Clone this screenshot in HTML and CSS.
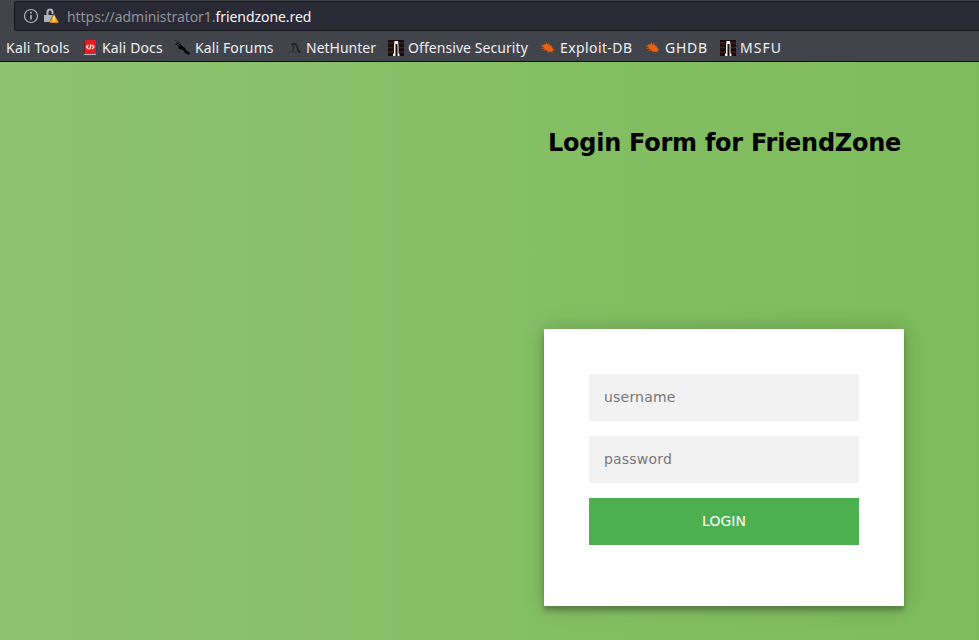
FILE: index.html
```
<!DOCTYPE html>
<html lang="en">
<head>
<meta charset="utf-8">
<title>Login</title>
<link rel="stylesheet" href="styles.css">
</head>
<body>
<svg class="defs" width="0" height="0">
  <symbol id="bug" viewBox="0 0 16 16"><path d="M2.500 5 6 4l3 .5L12 7l1.500 2.500-1.500 2.500L8 11.500 4.500 9z" fill="#ed6210"/><path d="M1 5.500 4 7M1.500 8.500 5 8M6.500 2.500v3M9 3l-.5 3M11.500 5l-1.500 2M3.500 10.500l3-1M8 12.500l.500-3M12 9.500l2.500.500M11 11l1.500 1.500" stroke="#d9590f" stroke-width="1"/></symbol>
  <symbol id="tower" viewBox="0 0 16 16"><path fill="#160c0d" d="M0 0h16v16H0z"/><path d="M0 3h5M11 3h5M0 7.500h5M11 7.500h5M0 12h5M11 12h5" stroke="#42201f" stroke-width="1.500"/><path d="M6.500 1h3.500l.5 4v8l1 1v2H9.500V4h-2v12H5v-2l1-1V5z" fill="#f4f0e8"/></symbol>
</svg>
<header class="chrome">
  <div class="address">
    <svg class="info" viewBox="0 0 16 16"><circle cx="8" cy="8" r="6.500" fill="none" stroke="#b3b3b7" stroke-width="1.200"/><path d="M8 7v4.500" stroke="#b3b3b7" stroke-width="1.600"/><circle cx="8" cy="4.700" r="1" fill="#b3b3b7"/></svg>
    <svg class="lock" viewBox="0 0 16 16"><path d="M4.500 7.500V4a2.500 2.500 0 0 1 5 0v2" fill="none" stroke="#b3b3b7" stroke-width="2"/><path d="M1 7h9v7H1z" fill="#b3b3b7"/><path d="m11 5.500 5 9.500H6z" fill="#ffab0a" stroke="#292a36" stroke-width=".5"/><path d="M11 8.500v3M11 12.500v1.300" stroke="#fff" stroke-width="1.300"/></svg>
    <span class="url">https://administrator1.<b>friendzone.red</b></span>
  </div>
  <nav class="bookmarks">
    <a class="tools"><span>Kali Tools</span></a>
    <a class="docs"><svg viewBox="0 0 16 16"><path d="M3 0h11v14H3z" fill="#e51d20"/><path d="M3 0 2 2v12l1 1z" fill="#861318"/><path d="M2 14h12v2H2z" fill="#b1bac2"/><path d="M2 15.500h12" stroke="#b41318"/><path d="m6.500 5-2 2 2 2M10 5l2 2-2 2M9 4.500l-1.500 5" fill="none" stroke="#fff" stroke-width="1.100"/></svg><span>Kali Docs</span></a>
    <a class="forums"><svg viewBox="0 0 16 16"><path d="m1 0 4 2 3 4 3 2 1 2 4 3-1 2-4-2-2-3-4-1-1-3-3-2 2-1z" fill="#050505"/><path d="m2 1 4 3M3 4l3 2" stroke="#73757a" stroke-width=".5"/></svg><span>Kali Forums</span></a>
    <a class="hunter"><svg viewBox="0 0 16 16"><path d="M5.500 5C9 2 11 5 11.500 8c.3 2 1.500 4 3 4.500" fill="none" stroke="#202124" stroke-width="1.700"/><path d="M6 5.500 8 7l-1.500 4.500" fill="none" stroke="#25262a" stroke-width="1.200"/><path d="m1.500 12.500 4-1 5 1.500" fill="none" stroke="#303238"/></svg><span>NetHunter</span></a>
    <a class="offensive"><svg><use href="#tower"/></svg><span>Offensive Security</span></a>
    <a class="exploit"><svg><use href="#bug"/></svg><span>Exploit-DB</span></a>
    <a class="ghdb"><svg><use href="#bug"/></svg><span>GHDB</span></a>
    <a class="msfu"><svg><use href="#tower"/></svg><span>MSFU</span></a>
  </nav>
</header>
<main class="page">
  <h2>Login Form for FriendZone</h2>
  <form class="card">
    <input type="text" placeholder="username">
    <input type="password" placeholder="password">
    <button type="button">LOGIN</button>
  </form>
</main>
</body>
</html>
```
FILE: styles.css
```
* { box-sizing: border-box; }
body { margin: 0; width: 979px; height: 640px; overflow: hidden; background: #42444c; }
.defs { display: none; }
.chrome { height: 62px; background: #42444c; border-bottom: 1px solid #101014; padding-top: 1px; font: 14px/20px "Noto Sans", sans-serif; color: #f0f0f1; }
.address { height: 30px; margin-left: 14px; display: flex; align-items: center; border: 1px solid #15161c; border-right: 0; border-radius: 3px 0 0 3px; background: #292a36; padding-left: 8px; }
.address svg { width: 16px; height: 16px; flex: none; }
.info { margin-right: 4px; }
.lock { margin-right: 8px; }
.url { color: #92939a; white-space: nowrap; padding-top: 2px; letter-spacing: -.06px; }
.url b { font-weight: 400; color: #f5f5f6; }
.bookmarks { display: flex; align-items: center; height: 34px; padding-left: 6px; gap: 12px; }
.bookmarks a { display: flex; align-items: center; gap: 4px; flex: none; white-space: nowrap; }
.bookmarks svg { width: 16px; height: 16px; flex: none; }
.tools { width: 64px; letter-spacing: .22px; }
.docs { width: 80px; letter-spacing: .15px; }
.forums { width: 100px; letter-spacing: .12px; }
.bookmarks .forums { gap: 5px; }
.hunter { width: 90px; }
.offensive { width: 140px; letter-spacing: .07px; }
.exploit { width: 93px; letter-spacing: .4px; }
.ghdb { width: 63px; letter-spacing: .7px; }
.msfu { width: 62px; letter-spacing: 1px; }
.page { height: 578px; padding: 67px 75px 0 544px; background: linear-gradient(to left, #76b852, #8dc26f) 0 0 / 1448px 100% no-repeat; font-family: "DejaVu Sans", sans-serif; }
h2 { margin: 0 0 172px; padding-left: 4px; font-size: 24px; line-height: 28px; letter-spacing: -.26px; white-space: nowrap; color: #000; }
.card { width: 360px; height: 277px; padding: 45px; background: #fff; box-shadow: 0 0 20px rgba(0,0,0,.2), 0 5px 5px rgba(0,0,0,.24); }
input, button { display: block; width: 270px; height: 47px; margin: 0 0 15px; padding: 15px; border: 0; border-radius: 0; font: 14px/17px "DejaVu Sans", sans-serif; }
input { background: #f2f2f2; padding: 14px 15px 16px; letter-spacing: .2px; }
input::placeholder { color: #777; opacity: 1; }
button { background: #4caf50; color: #fff; text-align: center; }
```
